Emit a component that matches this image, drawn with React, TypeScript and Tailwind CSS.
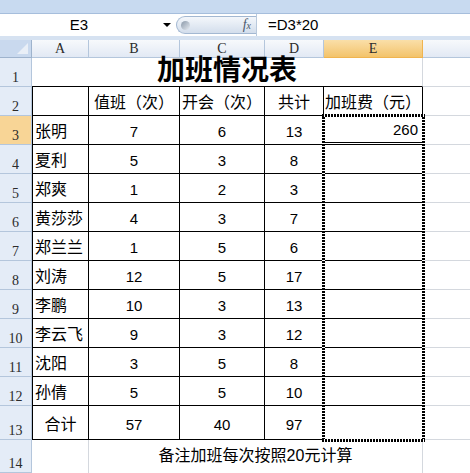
import { clsx } from "clsx";

const data = [
  ["张明", "7", "6", "13", "260"],
  ["夏利", "5", "3", "8", ""],
  ["郑爽", "1", "2", "3", ""],
  ["黄莎莎", "4", "3", "7", ""],
  ["郑兰兰", "1", "5", "6", ""],
  ["刘涛", "12", "5", "17", ""],
  ["李鹏", "10", "3", "13", ""],
  ["李云飞", "9", "3", "12", ""],
  ["沈阳", "3", "5", "8", ""],
  ["孙倩", "5", "5", "10", ""],
  ["合计", "57", "40", "97", ""],
];

const heads = ["值班（次）", "开会（次）", "共计", "加班费（元）"];

function RowHead({ n }: { n: number }) {
  return (
    <div
      className={clsx(
        "flex items-end justify-center border-r border-b border-[#b4c6dc] pb-[1px] font-['Liberation_Serif',serif] text-[14px] leading-none text-[#2b2b2b]",
        n === 3 ? "bg-[#f8d596]" : "bg-[#e4ecf7]"
      )}
    >
      {n}
    </div>
  );
}

function ColHead({ label, active }: { label: string; active?: boolean }) {
  return (
    <div
      className={clsx(
        "flex items-center justify-center border-r border-b pt-[1px] font-['Liberation_Serif',serif] text-[14px] leading-none text-[#2b2b2b]",
        active
          ? "border-[#f0b44f] bg-linear-to-b from-[#fadfa8] to-[#f3c36a]"
          : "border-[#b4c6dc] bg-linear-to-b from-[#f7f9fc] to-[#e2e9f4]"
      )}
    >
      {label}
    </div>
  );
}

function FormulaBar() {
  return (
    <div className="flex h-[22px] items-center bg-white">
      <div className="w-[158px] text-center text-[15px]">E3</div>
      <div className="flex w-[18px] justify-center">
        <div className="h-0 w-0 border-x-[4px] border-t-[4px] border-x-transparent border-t-black" />
      </div>
      <div className="flex h-[18px] w-[80px] items-center justify-between rounded-l-full border border-r-0 border-[#a3b8d2] bg-linear-to-b from-[#f4f7fb] to-[#d3deec] pl-[4px] pr-[5px]">
        <div className="h-[9px] w-[9px] rounded-full bg-linear-to-br from-[#8a98a8] to-[#e8edf3]" />
        <span className="font-['Liberation_Serif',serif] text-[14px] italic leading-none text-[#4a586b]">
          f<span className="text-[10px]">x</span>
        </span>
      </div>
      <div className="h-full border-l border-[#b9c9dc] pl-[11px] text-[15px] leading-[22px]">
        =D3*20
      </div>
    </div>
  );
}

export default function App() {
  return (
    <div className="relative h-[473px] w-[470px] overflow-hidden bg-white font-['Liberation_Sans','Noto_Sans_CJK_SC',sans-serif] text-black">
      <div className="h-[14px] border-b border-[#a6bedc] bg-[#c8daf0]" />
      <FormulaBar />
      <div className="h-[4px] bg-[#d6e2f1]" />

      <div className="grid grid-cols-[32px_57px_91px_85px_59px_99px_1fr] grid-rows-[18px_repeat(12,29px)_34px_33px]">
        {/* header row */}
        <div className="flex items-end justify-end border-r border-b border-[#9eb3cd] bg-[#c9d9ee] p-[3px]">
          <div className="h-0 w-0 border-b-[11px] border-l-[11px] border-b-[#e9eff7] border-l-transparent" />
        </div>
        <ColHead label="A" />
        <ColHead label="B" />
        <ColHead label="C" />
        <ColHead label="D" />
        <ColHead label="E" active />
        <div className="border-b border-[#b4c6dc] bg-linear-to-b from-[#f7f9fc] to-[#e2e9f4]" />

        {/* row 1: title */}
        <RowHead n={1} />
        <div className="col-span-5 flex items-end justify-center border-r border-b border-r-[#d4d8de] border-b-black pb-[1px] text-[28px] font-semibold leading-none">
          加班情况表
        </div>
        <div className="border-b border-[#d4d8de]" />

        {/* row 2: column titles */}
        <RowHead n={2} />
        <div className="border-r border-b border-l border-black" />
        {heads.map((h) => (
          <div
            key={h}
            className="flex items-end justify-center whitespace-nowrap border-r border-b border-black pb-[4px] text-[16px] leading-[16px]"
          >
            {h}
          </div>
        ))}
        <div className="border-b border-[#d4d8de]" />

        {/* rows 3-13 */}
        {data.map((r, i) => {
          const n = i + 3;
          const total = n === 13;
          return [
            <RowHead key={`h${n}`} n={n} />,
            <div
              key={`a${n}`}
              className={clsx(
                "flex items-end whitespace-nowrap border-r border-b border-l border-black pb-[4px] text-[16px] leading-[16px]",
                total ? "justify-center pb-[6px]" : "pl-[2px]"
              )}
            >
              {r[0]}
            </div>,
            ...[1, 2, 3].map((c) => (
              <div
                key={`c${n}-${c}`}
                className={clsx(
                  "flex items-end justify-center border-r border-b border-black text-[15px] leading-[16px]",
                  total ? "pb-[6px]" : "pb-[4px]"
                )}
              >
                {r[c]}
              </div>
            )),
            <div
              key={`e${n}`}
              className={clsx(
                "flex items-end justify-end border-r border-b border-black pb-[4px] pr-[4px] text-[15px] leading-[16px]",
                n === 3 && "border-b-[3px] border-double pb-[2px]"
              )}
            >
              {r[4]}
            </div>,
            <div key={`f${n}`} className="border-b border-[#d4d8de]" />,
          ];
        })}

        {/* row 14: note */}
        <RowHead n={14} />
        <div className="border-r border-[#d4d8de]" />
        <div className="col-span-4 flex items-start justify-center border-r border-[#d4d8de] pt-[8px] text-[16px] leading-[16px]">
          备注加班每次按照20元计算
        </div>
        <div />
      </div>

      {/* copy marquee around E3:E13 */}
      <div className="pointer-events-none absolute left-[322px] top-[114px] flex h-[328px] w-[103px] flex-col justify-between">
        <div className="h-[3px] bg-[repeating-linear-gradient(to_right,#000_0_2px,#fff_2px_3px)]" />
        <div className="flex flex-1 justify-between">
          <div className="w-[3px] bg-[repeating-linear-gradient(to_bottom,#000_0_2px,#fff_2px_3px)]" />
          <div className="w-[3px] bg-[repeating-linear-gradient(to_bottom,#000_0_2px,#fff_2px_3px)]" />
        </div>
        <div className="h-[3px] bg-[repeating-linear-gradient(to_right,#000_0_2px,#fff_2px_3px)]" />
      </div>
    </div>
  );
}
